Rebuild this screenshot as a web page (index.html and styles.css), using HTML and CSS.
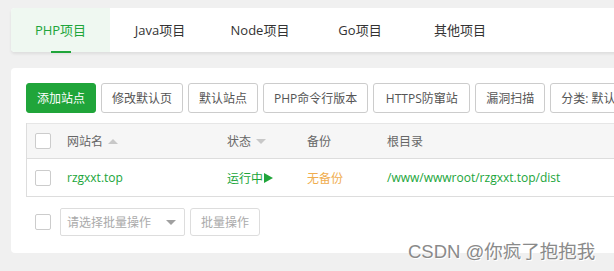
FILE: index.html
```html
<!DOCTYPE html>
<html lang="zh-CN">
<head>
  <meta charset="UTF-8">
  <title>网站</title>
  <link rel="stylesheet" href="styles.css">
</head>
<body>
  <div class="pagina">
    <div class="pestanas">
      <div class="pestana activa">PHP项目</div>
      <div class="pestana">Java项目</div>
      <div class="pestana">Node项目</div>
      <div class="pestana">Go项目</div>
      <div class="pestana">其他项目</div>
    </div>

    <div class="tarjeta">
      <div class="botones">
        <button class="btn verde">添加站点</button>
        <button class="btn">修改默认页</button>
        <button class="btn">默认站点</button>
        <button class="btn">PHP命令行版本</button>
        <button class="btn ancho">HTTPS防窜站</button>
        <button class="btn">漏洞扫描</button>
        <button class="btn">分类: 默认分类</button>
      </div>

      <div class="tabla">
        <div class="fila cabecera">
          <div class="celda"><span class="check"></span></div>
          <div class="celda">网站名 <span class="flecha arriba"></span></div>
          <div class="celda">状态 <span class="flecha abajo"></span></div>
          <div class="celda">备份</div>
          <div class="celda">根目录</div>
        </div>
        <div class="fila">
          <div class="celda"><span class="check"></span></div>
          <div class="celda verde-txt">rzgxxt.top</div>
          <div class="celda verde-txt">运行中<span class="play"></span></div>
          <div class="celda naranja">无备份</div>
          <div class="celda verde-txt">/www/wwwroot/rzgxxt.top/dist</div>
        </div>
      </div>

      <div class="pie">
        <span class="check"></span>
        <div class="selector">请选择批量操作<span class="flecha abajo oscura"></span></div>
        <button class="btn gris">批量操作</button>
      </div>
    </div>
  </div>

  <div class="marca">CSDN @你疯了抱抱我</div>
</body>
</html>
```

FILE: styles.css
```css
body, html {
  margin: 0;
  padding: 0;
  width: 614px;
  height: 271px;
  overflow: hidden;
  background: #f0f0f0;
  font-family: "Open Sans", "Noto Sans CJK SC", sans-serif;
  position: relative;
}

.pagina {
  padding: 8px 0 0 11px;
  width: 720px;
}

/* pestañas */
.pestanas {
  display: flex;
  height: 44px;
  background: #fff;
  border-radius: 4px 0 0 4px;
  box-shadow: 0 2px 3px rgba(0, 0, 0, 0.08);
}

.pestana {
  width: 100px;
  line-height: 44px;
  text-align: center;
  font-size: 13px;
  color: #333;
  position: relative;
}

.pestana.activa {
  width: 99px;
  background: #eff8f1;
  color: #20a53a;
  border-radius: 4px 0 0 4px;
}

.pestana.activa::after {
  content: "";
  position: absolute;
  left: 40px;
  bottom: -1px;
  width: 20px;
  height: 2px;
  background: #20a53a;
}

/* tarjeta */
.tarjeta {
  margin-top: 16px;
  background: #fff;
  border-radius: 4px 0 0 4px;
  padding: 15px 0 17px 15px;
}

.botones {
  display: flex;
  gap: 5px;
}

.btn {
  height: 30px;
  padding: 0 10px;
  border: 1px solid #ccc;
  border-radius: 3px;
  background: #fff;
  color: #555;
  font-family: inherit;
  font-size: 12px;
  white-space: nowrap;
}

.btn.verde {
  background: #20a53a;
  border-color: #20a53a;
  color: #fff;
}

.btn.ancho {
  padding: 0 11.5px;
}

.btn.gris {
  height: 28px;
  color: #aaa;
  border-color: #ddd;
  padding: 0 10px;
}

/* tabla */
.tabla {
  margin-top: 10px;
  border-left: 1px solid #ddd;
  font-size: 12px;
}

.fila {
  display: grid;
  grid-template-columns: 40px 160px 80px 80px 1fr;
  height: 37px;
  border-bottom: 1px solid #ddd;
  align-items: center;
}

.fila.cabecera {
  height: 34px;
  background: #f6f6f6;
  border-top: 1px solid #e6e6e6;
  color: #666;
}

.celda {
  display: flex;
  align-items: center;
  white-space: nowrap;
}

.celda:first-child {
  padding-left: 8px;
}

.check {
  display: inline-block;
  width: 14px;
  height: 14px;
  border: 1px solid #ccc;
  border-radius: 2px;
  background: #fff;
}

.flecha {
  display: inline-block;
  width: 0;
  height: 0;
  margin-left: 5px;
  border-left: 5px solid transparent;
  border-right: 5px solid transparent;
}

.flecha.arriba {
  border-bottom: 5px solid #c8c8c8;
}

.flecha.abajo {
  border-top: 5px solid #c8c8c8;
}

.flecha.oscura {
  border-top-color: #a0a0a0;
  margin-left: auto;
}

.play {
  display: inline-block;
  width: 0;
  height: 0;
  margin-left: 1px;
  border-top: 5px solid transparent;
  border-bottom: 5px solid transparent;
  border-left: 9px solid #20a53a;
}

.verde-txt { color: #20a53a; }
.naranja { color: #f0ad4e; }

/* pie */
.pie {
  display: flex;
  align-items: center;
  margin-top: 11px;
  padding-left: 9px;
  font-size: 12px;
}

.selector {
  display: flex;
  align-items: center;
  box-sizing: border-box;
  width: 125px;
  height: 28px;
  margin: 0 5px 0 9px;
  padding: 0 8px 0 6px;
  border: 1px solid #ddd;
  border-radius: 2px;
  color: #aaa;
}

/* marca de agua */
.marca {
  position: absolute;
  left: 408px;
  top: 237px;
  font-size: 18.5px;
  color: #8a8a8a;
  text-shadow: 0 0 1px #fff, 1px 1px 0 #fff;
  font-family: "Liberation Sans", "Noto Sans CJK SC", sans-serif;
}
```
